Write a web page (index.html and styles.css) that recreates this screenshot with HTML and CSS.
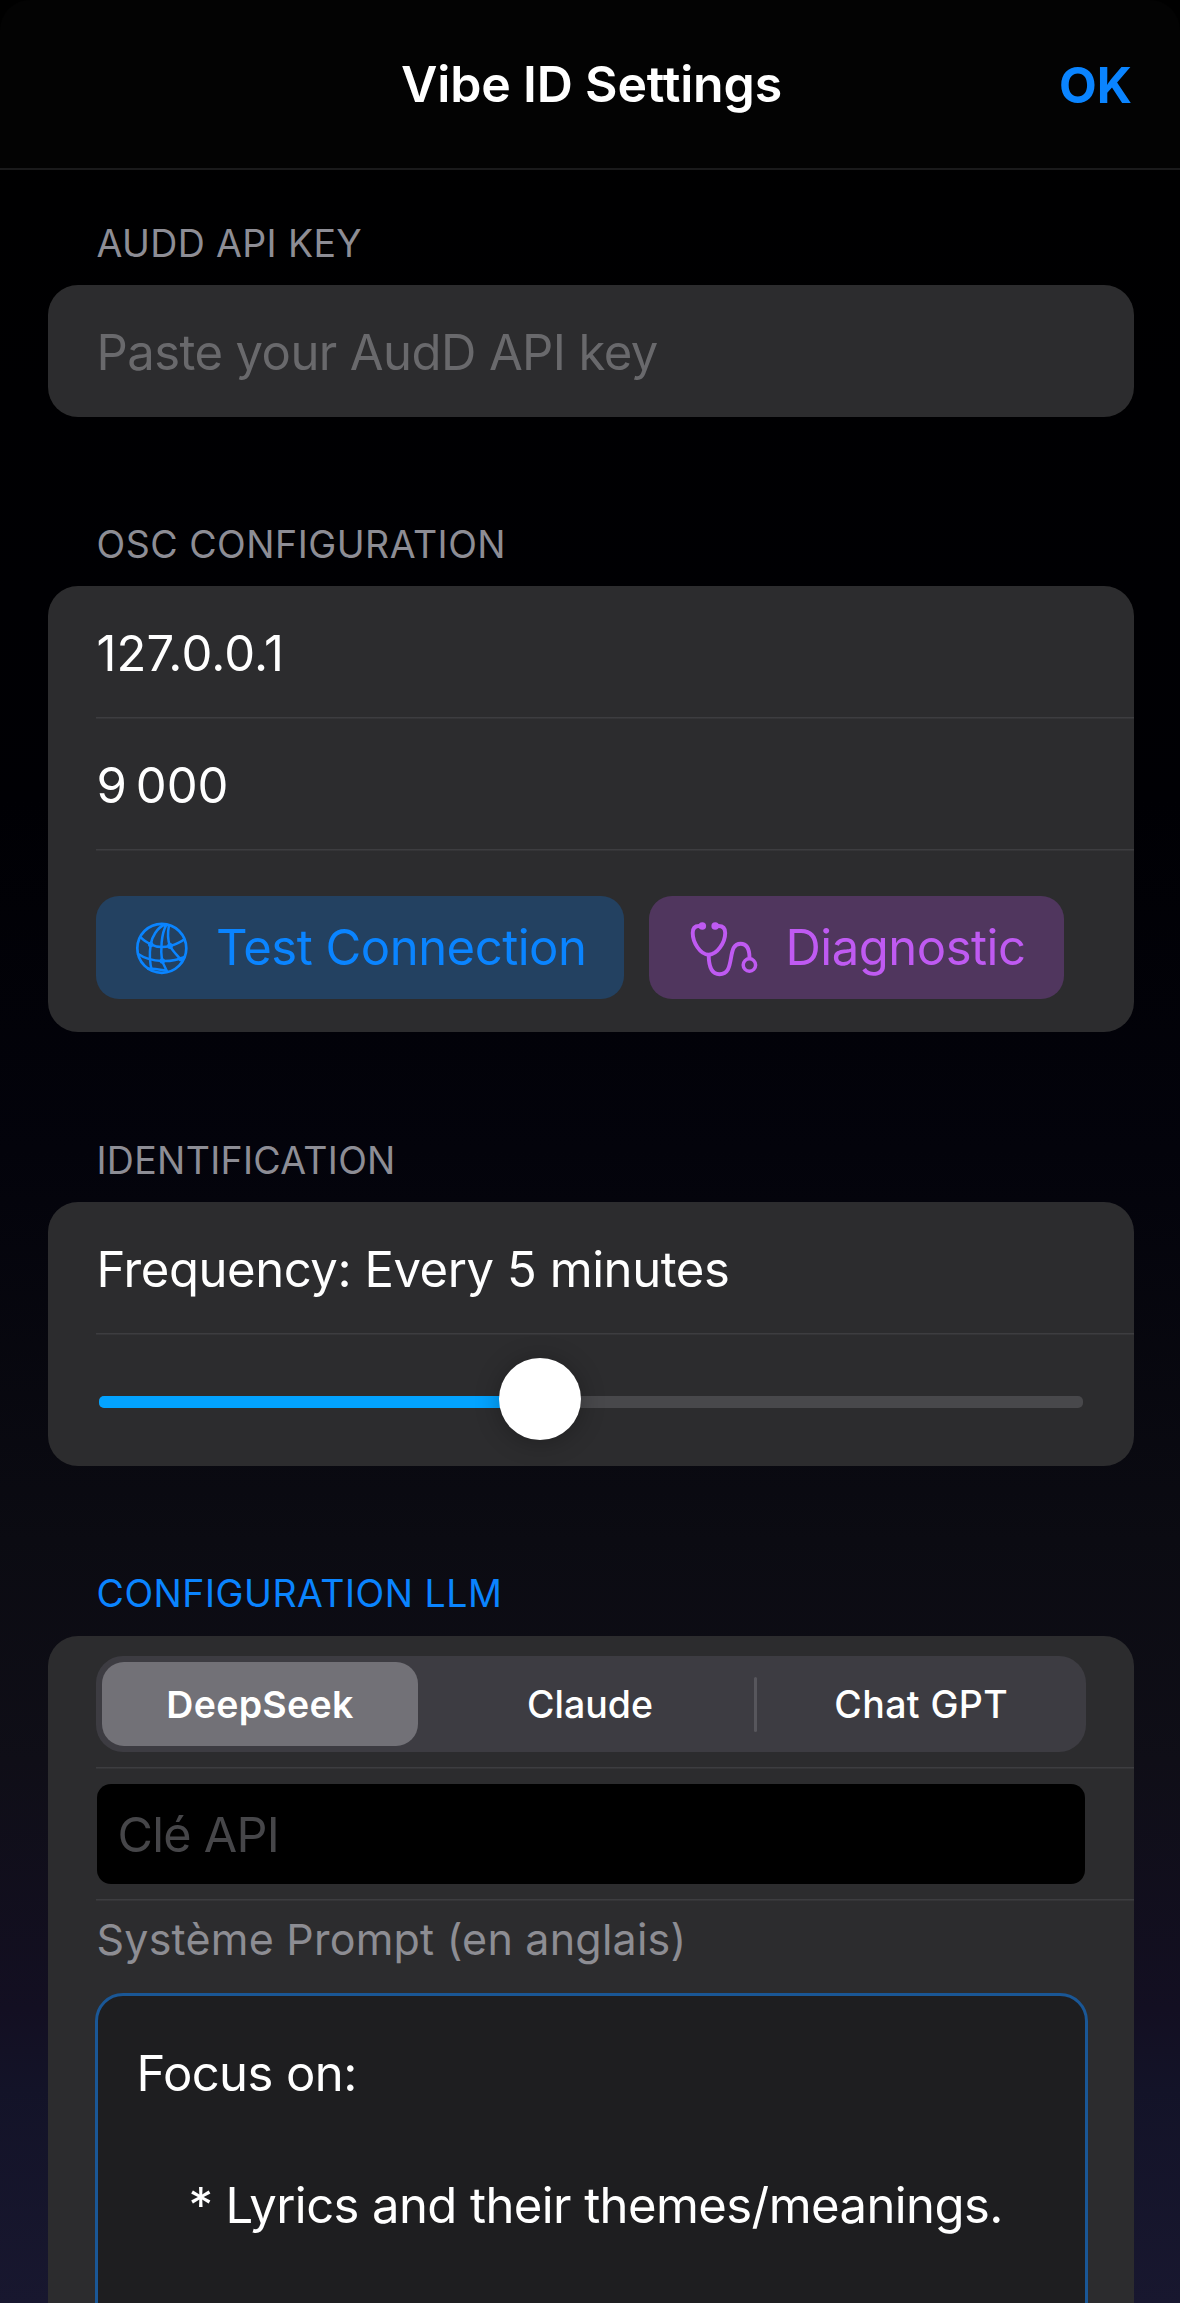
FILE: index.html
```
<!DOCTYPE html>
<html lang="fr">
<head>
<meta charset="utf-8">
<title>Vibe ID Settings</title>
<link rel="stylesheet" href="styles.css">
</head>
<body>
<div class="sheet">
  <header class="navbar">
    <span class="nav-side"></span>
    <h1 class="nav-title">Vibe ID Settings</h1>
    <span class="nav-side nav-ok">OK</span>
  </header>
  <main class="form">
    <section class="section">
      <h2 class="section-label">AUDD API KEY</h2>
      <div class="card">
        <div class="row placeholder">Paste your AudD API key</div>
      </div>
    </section>
    <section class="section">
      <h2 class="section-label label-wide">OSC CONFIGURATION</h2>
      <div class="card">
        <div class="row value-ip">127.0.0.1</div>
        <div class="row divided value-port">9&#8239;000</div>
        <div class="row divided buttons">
          <div class="button button-blue">
            <svg class="globe" viewBox="0 0 64 64" fill="none" stroke="currentColor" stroke-width="2.5">
              <circle cx="31.800" cy="32.300" r="24.500" stroke-width="2.700"/>
              <path d="M34.500 8.500C27 12 21.800 21 20.700 28.300C19.700 35 19 45 22 55M36.500 8.500C31 18 30.500 35 32 45L37.300 56M39 9C37.500 17 38 25 40 30C42.500 35 47.500 39.500 51 44"/>
              <path d="M10.500 21C13 24 17 26.500 20.700 28.300C26 31 34 31.500 40 30C46 28.300 51 26 54.700 23M7.300 37.500C14 42 23 44.800 32 45C39 45.200 47 44.500 54.500 41M17 52.500C22 52.300 30 53.500 36 54.500"/>
              <g fill="currentColor" stroke="none">
                <circle cx="20.700" cy="28.500" r="2.700"/>
                <circle cx="40" cy="30" r="2.900"/>
                <circle cx="32.300" cy="45" r="2.700"/>
                <circle cx="51" cy="43.200" r="2.400"/>
              </g>
            </svg>
            <span>Test Connection</span>
          </div>
          <div class="button button-purple">
            <svg class="stethoscope" viewBox="0 0 76 64" fill="none" stroke="currentColor" stroke-width="3.900">
              <path d="M16 10H13C8.600 10 6.700 12.500 6.700 17C6.700 26 14 38.700 22.700 38.700C31.500 38.700 39.200 26 39.200 17C39.200 12.500 37 10 32.500 10H29.300"/>
              <path d="M22.700 38.700C22.700 50 25 58.200 33.500 58.200C42 58.200 43.500 51 45 42C46.500 33 48 27.800 54.500 27.800C61 27.800 63.500 34 63.500 42"/>
              <circle cx="63.400" cy="49" r="6.200" stroke-width="3.500"/>
              <g fill="currentColor" stroke="none">
                <circle cx="16.300" cy="10" r="3.800"/>
                <circle cx="29.200" cy="10" r="3.800"/>
              </g>
            </svg>
            <span>Diagnostic</span>
          </div>
        </div>
      </div>
    </section>
    <section class="section">
      <h2 class="section-label label-narrow">IDENTIFICATION</h2>
      <div class="card">
        <div class="row frequency">Frequency: Every 5 minutes</div>
        <div class="row divided slider-row">
          <div class="slider">
            <div class="slider-fill"></div>
            <div class="slider-thumb"></div>
          </div>
        </div>
      </div>
    </section>
    <section class="section">
      <h2 class="section-label label-wide accent">CONFIGURATION LLM</h2>
      <div class="card card-open">
        <div class="row segment-row">
          <div class="segments">
            <div class="segment selected">DeepSeek</div>
            <div class="segment segment-middle">Claude</div>
            <div class="segment-divider"></div>
            <div class="segment segment-last">Chat GPT</div>
          </div>
        </div>
        <div class="row divided key-row">
          <div class="key-field">Clé API</div>
        </div>
        <div class="row divided prompt-row">
          <p class="prompt-label">Système Prompt (en anglais)</p>
          <div class="prompt-box">
            <p>Focus on:</p>
            <p class="prompt-item"><span>*</span><span>Lyrics and their themes/meanings.</span></p>
          </div>
        </div>
      </div>
    </section>
  </main>
</div>
</body>
</html>
```
FILE: styles.css
```
* { box-sizing: border-box; margin: 0; padding: 0; }
html { background: #000; }
body {
  height: 2303px;
  overflow: hidden;
  font: 400 49px/60px Inter, "Liberation Sans", sans-serif;
  color: #fff;
  white-space: nowrap;
}
.sheet {
  height: 2303px;
  overflow: hidden;
  border-radius: 30px 30px 0 0;
  background: linear-gradient(#000 0, #000004 800px, #03030b 1150px, #0b0b12 1540px, #0f0e17 1760px, #130f22 2010px, #131328 2090px, #18172f 2303px);
}

/* Navigation bar */
.navbar {
  display: flex;
  align-items: center;
  height: 170px;
  padding: 0 48px;
  border-bottom: 2px solid #1a1a1b;
  background: #030303;
}
.nav-side { flex: 1; text-align: right; }
.nav-title { margin-left: 3px; font-size: 50px; font-weight: 600; letter-spacing: -.17px; }
.nav-ok { padding-top: 3px; color: #0a84ff; font-weight: 700; }

/* Grouped form */
.form { padding: 50.5px 46.5px 0 48px; }
.section { margin-bottom: 105.5px; }
.section-label {
  height: 44px;
  margin: 0 0 20px 48.5px;
  font-size: 37.5px;
  font-weight: 400;
  line-height: 46px;
  letter-spacing: .36px;
  color: #8d8d95;
}
.label-wide { letter-spacing: .5px; }
.label-narrow { letter-spacing: .3px; }
.accent { margin-bottom: 21px; color: #0a84ff; }
.card {
  border-radius: 30px;
  background: #2c2c2e;
  overflow: hidden;
}
.row {
  display: flex;
  align-items: center;
  height: 132px;
  padding: 4.5px 48px 0 48.5px;
}
.divided {
  height: 133px;
  margin-top: -1px;
  padding-top: 5.5px;
  background: linear-gradient(#3d3d40, #3d3d40) 48px 0 / 100% 1.5px no-repeat;
}
.placeholder { color: #69696c; letter-spacing: -.58px; }
.value-ip { letter-spacing: .15px; }
.value-port { letter-spacing: -1.5px; }
.frequency { letter-spacing: -.43px; }

/* Action buttons */
.buttons { height: 183px; align-items: flex-start; gap: 25px; padding: 47px 0 0 48px; }
.button { display: flex; align-items: center; height: 103px; border-radius: 23px; letter-spacing: -.5px; }
.button-blue { width: 528px; color: #0a84ff; background: #234161; }
.button-purple { width: 415px; color: #bf5af2; background: #50365e; }
.button span { padding-top: 1px; }
.globe { width: 64px; height: 64px; margin: 0 22px 0 34px; }
.stethoscope { width: 76px; height: 64px; margin: 0 23.5px 0 37px; }

/* Slider */
.slider-row { padding: 0 50.5px 0 51px; }
.slider { position: relative; flex: 1; height: 12px; margin-top: 6px; border-radius: 5px; background: #48484b; }
.slider-fill { width: 441px; height: 12px; border-radius: 5px; background: #03a3ff; }
.slider-thumb {
  position: absolute;
  left: 399.5px;
  top: -38.5px;
  width: 82px;
  height: 82px;
  border-radius: 50%;
  background: #fff;
  box-shadow: 0 2px 24px rgba(0, 0, 0, .28);
}

/* Provider selector */
.card-open { height: 800px; }
.segment-row { padding: 4px 48px 0; }
.segments {
  display: flex;
  align-items: center;
  flex: 1;
  height: 96px;
  padding-left: 6px;
  border-radius: 27px;
  background: #3d3c42;
}
.segment { display: flex; justify-content: center; align-items: center; height: 84px; padding-top: 1px; font-size: 37.5px; font-weight: 500; }
.selected { width: 316px; border-radius: 22px; background: #727177; font-weight: 600; letter-spacing: .3px; }
.segment-middle { width: 328px; margin-left: 8px; }
.segment-divider { width: 3px; height: 55px; border-radius: 2px; background: #57565c; }
.segment-last { flex: 1; letter-spacing: .4px; }

/* Key field and prompt */
.key-row { padding: 1px 48.5px 0 49px; }
.key-field {
  display: flex;
  align-items: center;
  flex: 1;
  height: 100px;
  padding: 2px 0 0 20.5px;
  border-radius: 14px;
  background: #000;
  color: #464649;
  font-size: 48.5px;
  letter-spacing: -.7px;
}
.prompt-row { display: block; height: 600px; padding: 0; }
.prompt-label { height: 94px; padding: 10px 0 0 48.5px; font-size: 43px; letter-spacing: .22px; color: #8d8d93; }
.prompt-box {
  height: 500px;
  margin: 0 46px 0 47px;
  padding: 45px 38.5px;
  border: 3px solid #1a5796;
  border-radius: 28px;
  background: #1e1e20;
  line-height: 66px;
  letter-spacing: -.58px;
}
.prompt-item { display: flex; gap: 13px; margin-top: 66px; padding-left: 52px; }
```
